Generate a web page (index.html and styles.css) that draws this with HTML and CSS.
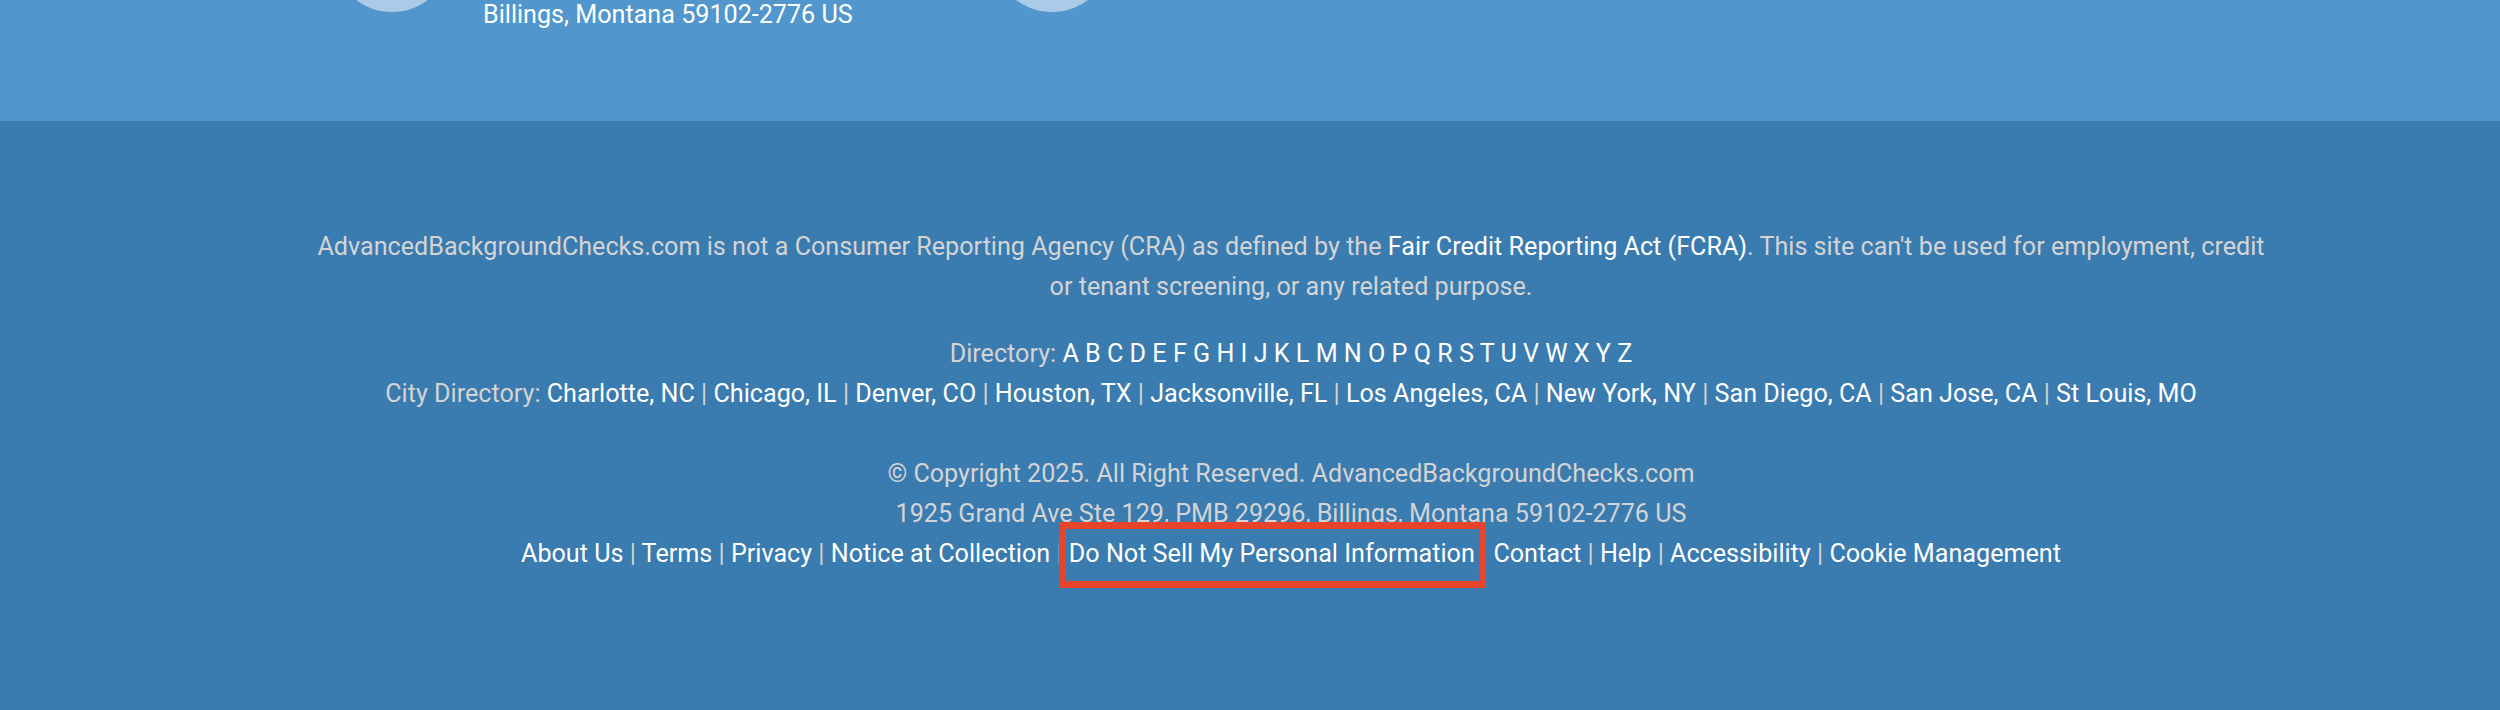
FILE: index.html
```html
<!DOCTYPE html>
<html lang="en">
<head>
<meta charset="utf-8">
<title>AdvancedBackgroundChecks.com footer</title>
<link rel="stylesheet" href="styles.css">
</head>
<body>
<section class="contact">
  <div class="contact-item">
    <div class="circle"></div>
    <div class="contact-text">Billings, Montana 59102-2776 US</div>
  </div>
  <div class="contact-item second">
    <div class="circle"></div>
  </div>
</section>
<footer class="footer">
  <p class="disclaimer">AdvancedBackgroundChecks.com is not a Consumer Reporting Agency (CRA) as defined by the <a class="link" href="#">Fair Credit Reporting Act (FCRA)</a>. This site can't be used for employment, credit or tenant screening, or any related purpose.</p>
  <p class="directory">Directory: <a class="link" href="#">A</a> <a class="link" href="#">B</a> <a class="link" href="#">C</a> <a class="link" href="#">D</a> <a class="link" href="#">E</a> <a class="link" href="#">F</a> <a class="link" href="#">G</a> <a class="link" href="#">H</a> <a class="link" href="#">I</a> <a class="link" href="#">J</a> <a class="link" href="#">K</a> <a class="link" href="#">L</a> <a class="link" href="#">M</a> <a class="link" href="#">N</a> <a class="link" href="#">O</a> <a class="link" href="#">P</a> <a class="link" href="#">Q</a> <a class="link" href="#">R</a> <a class="link" href="#">S</a> <a class="link" href="#">T</a> <a class="link" href="#">U</a> <a class="link" href="#">V</a> <a class="link" href="#">W</a> <a class="link" href="#">X</a> <a class="link" href="#">Y</a> <a class="link" href="#">Z</a></p>
  <p class="cities">City Directory: <a class="link" href="#">Charlotte, NC</a> | <a class="link" href="#">Chicago, IL</a> | <a class="link" href="#">Denver, CO</a> | <a class="link" href="#">Houston, TX</a> | <a class="link" href="#">Jacksonville, FL</a> | <a class="link" href="#">Los Angeles, CA</a> | <a class="link" href="#">New York, NY</a> | <a class="link" href="#">San Diego, CA</a> | <a class="link" href="#">San Jose, CA</a> | <a class="link" href="#">St Louis, MO</a></p>
  <p class="copyright">© Copyright 2025. All Right Reserved. AdvancedBackgroundChecks.com</p>
  <p class="address">1925 Grand Ave Ste 129, PMB 29296, Billings, Montana 59102-2776 US</p>
  <p class="legal"><a class="link" href="#">About Us</a> | <a class="link" href="#">Terms</a> | <a class="link" href="#">Privacy</a> | <a class="link" href="#">Notice at Collection</a> | <a class="link highlighted" href="#">Do Not Sell My Personal Information</a> | <a class="link" href="#">Contact</a> | <a class="link" href="#">Help</a> | <a class="link" href="#">Accessibility</a> | <a class="link" href="#">Cookie Management</a></p>
</footer>
</body>
</html>
```
FILE: styles.css
```css
html, body {
  margin: 0;
  padding: 0;
}
body {
  width: 2500px;
  height: 710px;
  overflow: hidden;
  font-family: Roboto, "Liberation Sans", sans-serif;
  background: #3a7bb0;
}
.contact {
  height: 121px;
  background: #5196cc;
  display: flex;
  padding-left: 332px;
  overflow: hidden;
}
.contact-item {
  display: flex;
  align-items: flex-start;
}
.contact-item.second {
  margin-left: 139px;
}
.circle {
  width: 120px;
  height: 120px;
  border-radius: 50%;
  background: #a9cbe7;
  margin-top: -108px;
  flex: none;
}
.contact-text {
  color: #ffffff;
  font-size: 25.15px;
  line-height: 28px;
  margin-left: 31px;
  margin-top: 1px;
}
.footer {
  height: 589px;
  box-sizing: border-box;
  background: #3a7bb0;
  padding: 106px 0 0 82px;
  text-align: center;
  color: #d4d4d4;
  font-size: 25.15px;
  line-height: 40px;
}
.footer p {
  margin: 0;
}
.disclaimer {
  max-width: 1966px;
  margin: 0 auto !important;
}
.directory {
  margin-top: 27px !important;
}
.copyright {
  margin-top: 40px !important;
}
.link {
  color: #ffffff;
  text-decoration: none;
}
.highlighted {
  position: relative;
  display: inline-block;
}
.highlighted::after {
  content: "";
  position: absolute;
  top: -12px;
  bottom: -14px;
  left: -10px;
  right: -11px;
  border: 7px solid #e8432b;
}
```
